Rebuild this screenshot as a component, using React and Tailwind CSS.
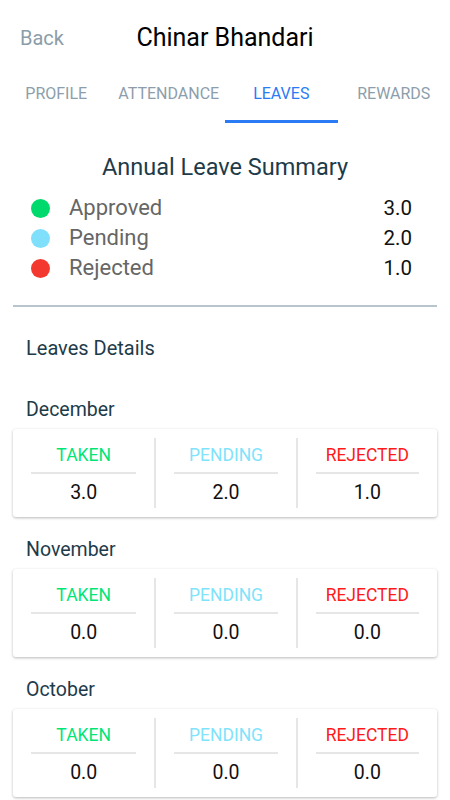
import React from "react";

const months = [
  { name: "December", taken: "3.0", pending: "2.0", rejected: "1.0" },
  { name: "November", taken: "0.0", pending: "0.0", rejected: "0.0" },
  { name: "October", taken: "0.0", pending: "0.0", rejected: "0.0" },
];

const legend = [
  { label: "Approved", value: "3.0", dot: "bg-[#00d96b]" },
  { label: "Pending", value: "2.0", dot: "bg-[#80e0fb]" },
  { label: "Rejected", value: "1.0", dot: "bg-[#f3392f]" },
];

function Col({ label, value, color, first }) {
  return (
    <div className={`flex flex-col items-stretch px-[18px] pt-[7px] pb-[3px] ${first ? "" : "border-l-2 border-[#e6e6e6]"}`}>
      <div className={`text-center text-[17.5px] leading-5 ${color}`}>{label}</div>
      <div className="mt-[7px] h-[2px] bg-[#e6e6e6]" />
      <div className="mt-[7px] text-center text-[19.5px] leading-6 text-[#111]">{value}</div>
    </div>
  );
}

export default function App() {
  return (
    <div className="w-[450px] min-h-[800px] bg-white" style={{ fontFamily: "Roboto, 'Liberation Sans', sans-serif" }}>
      {/* Header */}
      <div className="grid grid-cols-[1fr_auto_1fr] items-center pt-6 pb-5">
        <div className="pl-5 text-[20px] leading-7 text-[#8c9daa]">Back</div>
        <div className="text-[25px] leading-7 text-black">Chinar Bhandari</div>
        <div />
      </div>
      {/* Tabs */}
      <div className="grid grid-cols-4">
        {["PROFILE", "ATTENDANCE", "LEAVES", "REWARDS"].map((t) => (
          <div
            key={t}
            className={`pt-3 pb-4 text-center text-[16px] leading-5 border-b-[3px] ${
              t === "LEAVES" ? "text-[#2a7bf4] border-[#2a7bf4]" : "text-[#8c9eab] border-transparent"
            }`}
          >
            {t}
          </div>
        ))}
      </div>
      {/* Summary */}
      <div className="mt-[30px] text-center text-[23.5px] leading-7 text-[#1e3b4a]">Annual Leave Summary</div>
      <div className="mt-[12px] flex flex-col pl-[31px] pr-[38px]">
        {legend.map((l) => (
          <div key={l.label} className="flex h-[30px] items-center">
            <div className={`h-[19px] w-[19px] rounded-full ${l.dot}`} />
            <div className="ml-[19px] flex-1 text-[22px] leading-7 text-[#666]">{l.label}</div>
            <div className="text-[20.5px] leading-7 text-[#111]">{l.value}</div>
          </div>
        ))}
      </div>
      <div className="mx-[13px] mt-[22px] h-[2px] bg-[#b9c5cd]" />
      <div className="mt-[29px] pl-[26px] text-[20px] leading-6 text-[#1e3b4a]">Leaves Details</div>
      <div className="mt-[38px] flex flex-col">
        {months.map((m) => (
          <div key={m.name} className="mt-[21px] first:mt-0 flex flex-col">
            <div className="pl-[26px] text-[19.5px] leading-6 text-[#1e3b4a]">{m.name}</div>
            <div className="mx-[13px] mt-[7px] grid grid-cols-3 rounded-[3px] bg-white py-[9px] shadow-[0_1px_3px_rgba(0,0,0,0.28)]">
              <Col first label="TAKEN" value={m.taken} color="text-[#00e676]" />
              <Col label="PENDING" value={m.pending} color="text-[#7fe3fb]" />
              <Col label="REJECTED" value={m.rejected} color="text-[#ff1a1a]" />
            </div>
          </div>
        ))}
      </div>
    </div>
  );
}
